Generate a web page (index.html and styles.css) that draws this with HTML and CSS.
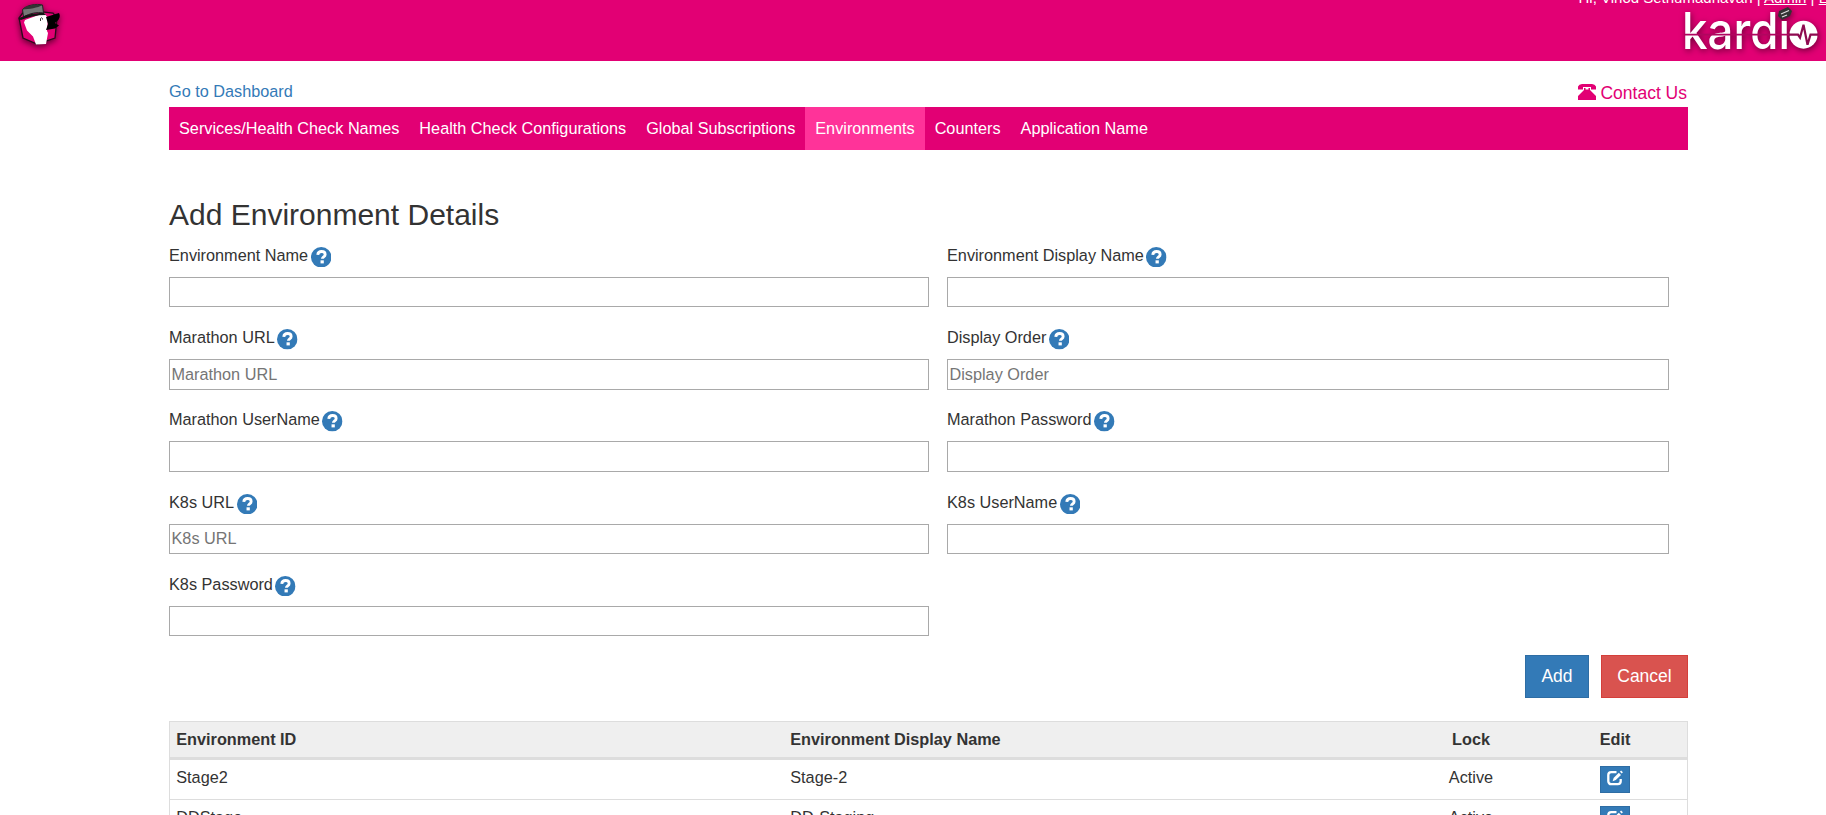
FILE: index.html
```html
<!DOCTYPE html>
<html lang="en">
<head>
<meta charset="utf-8">
<title>Kardio - Environments</title>
<link rel="stylesheet" href="styles.css">
</head>
<body>
<svg class="defs" width="0" height="0" aria-hidden="true">
  <symbol id="help" viewBox="0 0 20 20">
    <circle cx="10" cy="10" r="10" fill="#337ab7"/>
    <path d="M6.600 7.600C6.800 5.300 8.200 4.400 10.300 4.400c2.200 0 3.500 1.100 3.500 2.800 0 2.500-2.600 2.400-2.700 4.300" fill="none" stroke="#fff" stroke-width="2.800"/>
    <rect x="9.300" y="13" width="3.200" height="3" fill="#fff"/>
  </symbol>
  <symbol id="edit" viewBox="0 0 16 16">
    <path d="M9.500 2.200H4.200A2.900 2.900 0 0 0 1.300 5.100v6.200a2.900 2.900 0 0 0 2.900 2.900h6.600a2.900 2.900 0 0 0 2.900-2.900V9" fill="none" stroke="#fff" stroke-width="2.300"/>
    <path d="M5.600 11.200l1-3.300 5.200-5.200 2.200 2.200-5.200 5.200z" fill="#fff"/>
    <path d="M12.900 1.700l1.200-1.200 1.800 1.800-1.200 1.200z" fill="#fff"/>
  </symbol>
</svg>
<header class="topbar">
  <svg class="mascot" width="70" height="61" viewBox="0 0 70 61">
    <path d="M19 18l6-8 28 3 4 5-2 20-18 6-14-6z" fill="#e20074" stroke="#2b0a1b" stroke-width="1.300"/>
    <path d="M25 20l19-7 4 5-1 13 1 2-2 11-10 .500-3-8-6-6-3-8z" fill="#fff"/>
    <path d="M22.500 9.500c4-4.500 14-6 20-4.500l1 8c-7-1-13 0-20 4z" fill="#777" stroke="#222" stroke-width="1"/>
    <path d="M22.500 9.500c4-4.500 14-6 20-4.500-5 3-13 4-20 4.500z" fill="#333"/>
    <path d="M18 19c6-4 15-6 26-6l2 2c-9 0-18 2-25 5z" fill="#151515"/>
    <path d="M46 17l13-4c2 4 0 7-4 10l4 2.500-4 3-9 1.500 2-6z" fill="#000"/>
    <path d="M40.500 21v-2.500q1-1.500 2 0v1" fill="none" stroke="#333" stroke-width="1"/>
  </svg>
  <div class="account">
    <div class="user">Hi, Vinod Sethumadhavan | <a>Admin</a> | <a>Logout</a></div>
    <svg class="brand" width="140" height="58" viewBox="0 0 140 58">
      <text x="-2" y="46" class="wordmark" textLength="108" lengthAdjust="spacingAndGlyphs">kardi</text>
      <circle cx="119.500" cy="31.700" r="14" fill="#fff"/>
      <path d="M0 31.700H106" stroke="#b0065f" stroke-width="1.800"/>
      <path d="M105 31.700h9l2 3 3.500-13 4 20 3-10H134" fill="none" stroke="#8e0a50" stroke-width="2.200"/>
      <path d="M95 8l9-4 4 4-2 5-8 4-4-4z" fill="#333"/>
      <path d="M97 11l8-3.500M98 14l5-2" stroke="#ddd" stroke-width="1.200"/>
    </svg>
  </div>
</header>
<main class="page">
  <div class="links">
    <a class="dash">Go to Dashboard</a>
    <a class="contact"><svg width="18" height="16" viewBox="0 0 18 16"><path d="M0 5.500V2.500Q1 0 4 0h10q3 0 4 2.500v3h-5V3H5v2.500zM6 4h1.500v1.500h3V4H12v2l6 6v4H0v-4l6-6z" fill="#e20074"/></svg>Contact Us</a>
  </div>
  <nav class="tabs"><a>Services/Health Check Names</a><a>Health Check Configurations</a><a>Global Subscriptions</a><a class="active">Environments</a><a>Counters</a><a>Application Name</a></nav>
  <h1>Add Environment Details</h1>
  <form class="fields">
    <div class="field"><label>Environment Name<svg class="help"><use href="#help"/></svg></label><input></div>
    <div class="field"><label>Environment Display Name<svg class="help"><use href="#help"/></svg></label><input></div>
    <div class="field"><label>Marathon URL<svg class="help"><use href="#help"/></svg></label><input placeholder="Marathon URL"></div>
    <div class="field"><label>Display Order<svg class="help"><use href="#help"/></svg></label><input placeholder="Display Order"></div>
    <div class="field"><label>Marathon UserName<svg class="help"><use href="#help"/></svg></label><input></div>
    <div class="field"><label>Marathon Password<svg class="help"><use href="#help"/></svg></label><input></div>
    <div class="field"><label>K8s URL<svg class="help"><use href="#help"/></svg></label><input placeholder="K8s URL"></div>
    <div class="field"><label>K8s UserName<svg class="help"><use href="#help"/></svg></label><input></div>
    <div class="field"><label>K8s Password<svg class="help"><use href="#help"/></svg></label><input></div>
  </form>
  <div class="actions"><button class="btn add">Add</button><button class="btn cancel">Cancel</button></div>
  <div class="table">
    <div class="row head"><span>Environment ID</span><span>Environment Display Name</span><span class="mid">Lock</span><span class="mid">Edit</span></div>
    <div class="row"><span>Stage2</span><span>Stage-2</span><span class="mid">Active</span><span class="mid"><button class="edit"><svg width="16" height="16"><use href="#edit"/></svg></button></span></div>
    <div class="row"><span>DDStage</span><span>DD-Staging</span><span class="mid">Active</span><span class="mid"><button class="edit"><svg width="16" height="16"><use href="#edit"/></svg></button></span></div>
  </div>
</main>
</body>
</html>
```
FILE: styles.css
```css
* { box-sizing: border-box; }
html, body { height: 100%; }
body { margin: 0; overflow: hidden; background: #fff; color: #333; font: 16.25px/23px "Liberation Sans", Arial, sans-serif; }
.defs { position: absolute; }
.topbar { display: flex; justify-content: space-between; height: 61px; background: #e20074; overflow: hidden; }
.mascot { filter: drop-shadow(0 2px 3px rgba(0,0,0,.6)); }
.account { width: 247.500px; color: #fff; }
.user { height: 15px; line-height: 20px; font-size: 15px; white-space: nowrap; margin-top: -12px; }
.user a { text-decoration: underline; }
.brand { display: block; overflow: visible; margin-left: 105px; filter: drop-shadow(1px 2px 3px rgba(0,0,0,.5)); }
.wordmark { font: 500 51px Inter, sans-serif; fill: #fff; }
.page { width: 1519px; margin-left: 169px; }
.links { display: flex; justify-content: space-between; height: 46px; padding-top: 19px; }
.dash { color: #337ab7; }
.contact { display: flex; gap: 4px; color: #e20074; font-size: 17.5px; line-height: 27px; padding-right: 1px; }
.contact svg { margin-top: 4px; }
.tabs { display: flex; height: 43px; background: #e20074; color: #fff; }
.tabs a { padding: 10px; line-height: 23px; }
.tabs .active { background: #ff3399; }
h1 { margin: 48px 0 0; font-size: 30px; line-height: 33px; font-weight: 400; }
.fields { display: grid; grid-template-columns: 760px 722px; column-gap: 18px; grid-auto-rows: 82.25px; padding-top: 12.750px; height: 424px; }
.field label { display: flex; height: 33px; line-height: 23px; }
.help { width: 20.500px; height: 20.500px; margin: 3px 0 0 2.500px; }
.field input { display: block; width: 100%; height: 30.500px; border: 1px solid #a9a9a9; padding: 1px 1.500px; font: inherit; color: #333; }
.field input::placeholder { color: #757575; }
.actions { display: flex; justify-content: flex-end; gap: 12px; height: 66px; }
.btn { height: 43px; padding: 0; border: 1px solid #2e6da4; background: #337ab7; color: #fff; font: 17.5px/25px "Liberation Sans", Arial, sans-serif; }
.add { width: 64px; }
.cancel { width: 87px; background: #d9534f; border-color: #d43f3a; }
.table { border: 1px solid #ddd; }
.row { display: grid; grid-template-columns: 614px 615px 144px 144px; height: 40px; border-bottom: 1px solid #ddd; }
.row span { padding: 6px 6.250px; }
.row .mid { padding: 6px 0; text-align: center; }
.head { height: 38px; background: #efefef; border-bottom: 3px solid #ddd; font-weight: 700; }
.edit { display: block; width: 30px; height: 27px; margin: 0 auto; padding: 3px 6px 7px; border: 1px solid #2e6da4; background: #337ab7; }
.edit svg { display: block; }
```
